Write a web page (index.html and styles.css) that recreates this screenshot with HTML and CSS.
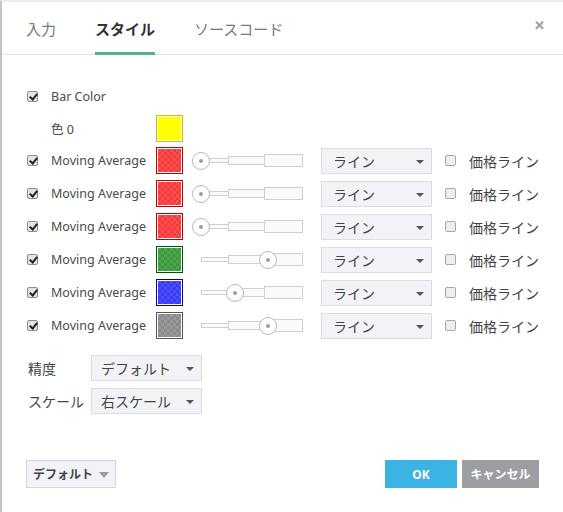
FILE: index.html
```html
<!DOCTYPE html>
<html lang="ja">
<head>
  <meta charset="UTF-8" />
  <title>スタイル</title>
  <link rel="stylesheet" href="styles.css">
</head>
<body>
<div class="dialog">
  <div class="header">
    <div class="tab">入力</div>
    <div class="tab active">スタイル</div>
    <div class="tab">ソースコード</div>
    <div class="close">&#x2715;</div>
  </div>

  <div class="content">
    <div class="row short">
      <span class="check on"></span>
      <span class="label">Bar Color</span>
    </div>
    <div class="row short">
      <span class="check blank"></span>
      <span class="label">色 0</span>
      <span class="swatch solid" style="--c: #ffff00; --b: #c9c000"></span>
    </div>

    <div class="row">
      <span class="check on"></span>
      <span class="label">Moving Average</span>
      <span class="swatch" style="--c: rgba(255,0,0,.7); --b: #c00000"></span>
      <div class="slider"><span class="t1"></span><span class="t2"></span><span class="t3"></span><span class="knob" style="left: 0px"></span></div>
      <div class="select wide"><span>ライン</span><i class="caret"></i></div>
      <span class="check"></span>
      <span class="price">価格ライン</span>
    </div>
    <div class="row">
      <span class="check on"></span>
      <span class="label">Moving Average</span>
      <span class="swatch" style="--c: rgba(255,0,0,.7); --b: #c00000"></span>
      <div class="slider"><span class="t1"></span><span class="t2"></span><span class="t3"></span><span class="knob" style="left: 0px"></span></div>
      <div class="select wide"><span>ライン</span><i class="caret"></i></div>
      <span class="check"></span>
      <span class="price">価格ライン</span>
    </div>
    <div class="row">
      <span class="check on"></span>
      <span class="label">Moving Average</span>
      <span class="swatch" style="--c: rgba(255,0,0,.7); --b: #c00000"></span>
      <div class="slider"><span class="t1"></span><span class="t2"></span><span class="t3"></span><span class="knob" style="left: 0px"></span></div>
      <div class="select wide"><span>ライン</span><i class="caret"></i></div>
      <span class="check"></span>
      <span class="price">価格ライン</span>
    </div>
    <div class="row">
      <span class="check on"></span>
      <span class="label">Moving Average</span>
      <span class="swatch" style="--c: rgba(0,128,0,.7); --b: #005500"></span>
      <div class="slider"><span class="t1"></span><span class="t2"></span><span class="t3"></span><span class="knob" style="left: 67px"></span></div>
      <div class="select wide"><span>ライン</span><i class="caret"></i></div>
      <span class="check"></span>
      <span class="price">価格ライン</span>
    </div>
    <div class="row">
      <span class="check on"></span>
      <span class="label">Moving Average</span>
      <span class="swatch" style="--c: rgba(0,0,255,.7); --b: #0000bb"></span>
      <div class="slider"><span class="t1"></span><span class="t2"></span><span class="t3"></span><span class="knob" style="left: 34px"></span></div>
      <div class="select wide"><span>ライン</span><i class="caret"></i></div>
      <span class="check"></span>
      <span class="price">価格ライン</span>
    </div>
    <div class="row">
      <span class="check on"></span>
      <span class="label">Moving Average</span>
      <span class="swatch" style="--c: rgba(110,110,110,.7); --b: #555555"></span>
      <div class="slider"><span class="t1"></span><span class="t2"></span><span class="t3"></span><span class="knob" style="left: 67px"></span></div>
      <div class="select wide"><span>ライン</span><i class="caret"></i></div>
      <span class="check"></span>
      <span class="price">価格ライン</span>
    </div>

    <div class="opts">
      <div class="opt-row">
        <span class="opt-label">精度</span>
        <div class="select"><span>デフォルト</span><i class="caret"></i></div>
      </div>
      <div class="opt-row">
        <span class="opt-label">スケール</span>
        <div class="select"><span>右スケール</span><i class="caret"></i></div>
      </div>
    </div>
  </div>

  <div class="footer">
    <div class="btn-default">デフォルト <i class="caret light"></i></div>
    <div class="spacer"></div>
    <div class="btn ok">OK</div>
    <div class="btn cancel">キャンセル</div>
  </div>
</div>
</body>
</html>
```

FILE: styles.css
```css
:root {
  --text: #4a4a4a;
  --muted: #7a7a7a;
  --line: #e0e3e8;
  --select-bg: #f2f3f7;
  --select-border: #dadde3;
  --accent: #4fb58a;
}

* {
  box-sizing: border-box;
  margin: 0;
  padding: 0;
}

body {
  background: #fff;
  font-family: 'Noto Sans', 'Noto Sans CJK JP', sans-serif;
  font-size: 13px;
  color: var(--text);
}

.dialog {
  width: 563px;
  height: 512px;
  border-left: 2px solid #c4c4c4;
  border-top: 2px solid #ececec;
  display: flex;
  flex-direction: column;
}

/* tabs */
.header {
  height: 53px;
  border-bottom: 1px solid var(--line);
  display: flex;
  align-items: stretch;
  padding-left: 24px;
  position: relative;
}

.tab {
  font-size: 15px;
  color: var(--muted);
  display: flex;
  align-items: center;
  margin-right: 39px;
  border-bottom: 3px solid transparent;
  padding-top: 3px;
  margin-bottom: -1px;
}

.tab.active {
  color: #333;
  font-weight: bold;
  border-bottom-color: var(--accent);
}

.close {
  position: absolute;
  right: 18px;
  top: 14px;
  font-size: 13px;
  font-weight: bold;
  color: #999;
}

/* rows */
.content {
  padding: 25px 0 0 25px;
}

.row {
  height: 33px;
  display: flex;
  align-items: center;
}

.row.short {
  height: 32px;
}

.check {
  width: 11px;
  height: 11px;
  border: 1px solid #a8a8a8;
  border-radius: 2px;
  background: #eee;
  position: relative;
  flex: none;
}

.check.on {
  background: #e4e4e4;
  border-color: #8e8e8e;
}

.check.on::after {
  content: "";
  position: absolute;
  left: 3px;
  top: 0px;
  width: 3px;
  height: 6px;
  border: solid #222;
  border-width: 0 2px 2px 0;
  transform: rotate(40deg);
}

.check.blank {
  visibility: hidden;
}

.label {
  width: 118px;
  padding-left: 13px;
  flex: none;
  white-space: nowrap;
  font-size: 12.5px;
}

.swatch {
  width: 27px;
  height: 27px;
  border: 1px solid var(--b);
  padding: 1px;
  background-clip: content-box;
  flex: none;
  background-image:
    linear-gradient(var(--c), var(--c)),
    linear-gradient(45deg, #ccc 25%, transparent 25%, transparent 75%, #ccc 75%),
    linear-gradient(45deg, #ccc 25%, #fff 25%, #fff 75%, #ccc 75%);
  background-size: 100% 100%, 6px 6px, 6px 6px;
  background-position: 0 0, 0 0, 3px 3px;
  background-origin: content-box;
}

.swatch.solid {
  background: var(--c);
  background-clip: content-box;
}

/* line width slider */
.slider {
  width: 111px;
  height: 20px;
  margin-left: 9px;
  position: relative;
  display: flex;
  align-items: center;
  padding-left: 9px;
  flex: none;
}

.slider span {
  display: block;
  border: 1px solid #cfcfcf;
  background: #fafafa;
}

.slider .t1 { width: 28px; height: 5px; }
.slider .t2 { width: 37px; height: 9px; margin-left: -1px; }
.slider .t3 { width: 39px; height: 13px; margin-left: -1px; }

.slider .knob {
  position: absolute;
  top: 1px;
  width: 18px;
  height: 18px;
  border-radius: 50%;
  border: 1px solid #b5b9c0;
  background: #fff;
}

.slider .knob::after {
  content: "";
  position: absolute;
  left: 6px;
  top: 6px;
  width: 4px;
  height: 4px;
  border-radius: 50%;
  background: #9a9ea6;
}

/* selects */
.select {
  width: 111px;
  height: 26px;
  background: var(--select-bg);
  border: 1px solid var(--select-border);
  display: flex;
  align-items: center;
  justify-content: space-between;
  padding: 0 7px 0 11px;
  font-size: 14px;
  color: #444;
  flex: none;
}

.select.wide {
  margin-left: 18px;
  margin-right: 13px;
}

.caret {
  width: 0;
  height: 0;
  border-left: 4px solid transparent;
  border-right: 4px solid transparent;
  border-top: 4px solid #555;
  margin-top: 2px;
}

.caret.light {
  border-top-color: #999;
  border-left-width: 5px;
  border-right-width: 5px;
  border-top-width: 6px;
}

.price {
  margin-left: 13px;
  font-size: 14px;
  color: #444;
}

.opts {
  margin-top: 13px;
  margin-left: 1px;
  display: flex;
  flex-direction: column;
  gap: 7px;
}

.opt-row {
  display: flex;
  align-items: center;
}

.opt-label {
  width: 63px;
  font-size: 14px;
  color: #444;
}

.select span {
  white-space: nowrap;
}

.opt-row .select {
  padding-left: 9px;
}

/* footer */
.footer {
  margin-top: auto;
  margin-bottom: 24px;
  display: flex;
  align-items: center;
  padding: 0 24px 0 24px;
}

.btn-default {
  width: 90px;
  height: 28px;
  background: var(--select-bg);
  border: 1px solid #d3d6dc;
  display: flex;
  align-items: center;
  justify-content: center;
  gap: 6px;
  font-size: 12px;
  font-weight: bold;
  color: #444;
}

.spacer {
  flex: 1;
}

.btn {
  height: 28px;
  display: flex;
  align-items: center;
  justify-content: center;
  color: #fff;
  font-weight: bold;
  font-size: 12px;
}

.btn.ok {
  width: 72px;
  background: #3bb3e4;
  margin-right: 5px;
}

.btn.cancel {
  width: 77px;
  background: #9c9ea4;
}
```
